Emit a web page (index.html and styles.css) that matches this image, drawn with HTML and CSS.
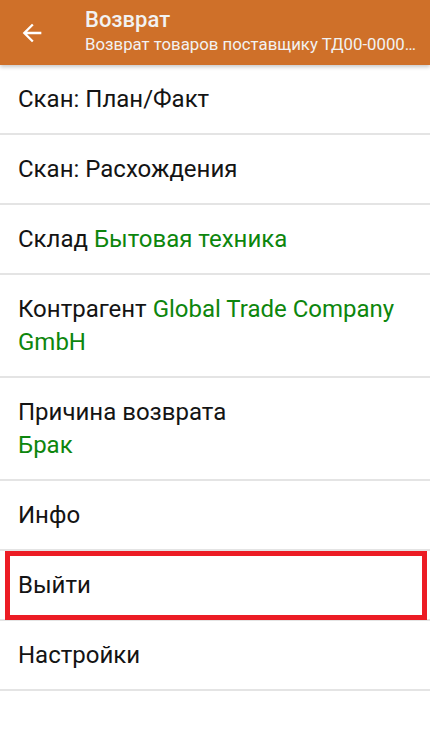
FILE: index.html
```html
<!DOCTYPE html>
<html lang="ru">
<head>
<meta charset="utf-8">
<title>Возврат</title>
<link rel="stylesheet" href="styles.css">
</head>
<body>
<header class="appbar">
  <div class="back">
    <svg viewBox="0 0 24 24" width="28" height="28"><path d="M20 11H7.83l5.59-5.59L12 4l-8 8 8 8 1.41-1.41L7.83 13H20v-2z" fill="#fff"/></svg>
  </div>
  <div class="titles">
    <div class="title">Возврат</div>
    <div class="subtitle">Возврат товаров поставщику ТД00-0000…</div>
  </div>
</header>
<main class="list">
  <div class="item">Скан: План/Факт</div>
  <div class="item">Скан: Расхождения</div>
  <div class="item">Склад <span class="val">Бытовая техника</span></div>
  <div class="item">Контрагент <span class="val">Global Trade Company GmbH</span></div>
  <div class="item">Причина возврата<br><span class="val">Брак</span></div>
  <div class="item">Инфо</div>
  <div class="item marked">Выйти<span class="highlight"></span></div>
  <div class="item">Настройки</div>
</main>
</body>
</html>
```
FILE: styles.css
```css
html, body {
  margin: 0;
  padding: 0;
  background: #fff;
}
body {
  font-family: Roboto, "Noto Sans", "Liberation Sans", sans-serif;
  width: 430px;
  height: 738px;
  overflow: hidden;
}
.appbar {
  height: 65px;
  background: #cf7029;
  display: flex;
  align-items: center;
  box-shadow: 0 2px 4px rgba(0,0,0,0.22);
  position: relative;
  z-index: 1;
}
.back {
  width: 64px;
  height: 65px;
  display: flex;
  align-items: center;
  justify-content: center;
}
.back svg {
  display: block;
}
.titles {
  flex: 1;
  min-width: 0;
  padding-left: 21px;
  padding-right: 10px;
  color: #f2f2f2;
}
.title {
  font-size: 22px;
  font-weight: 500;
  line-height: 26px;
  margin-top: -3px;
}
.subtitle {
  font-size: 16.8px;
  line-height: 22px;
  white-space: nowrap;
  overflow: hidden;
  text-overflow: ellipsis;
}
.list {
  display: flex;
  flex-direction: column;
}
.item {
  position: relative;
  padding: 18px 18px 17px;
  font-size: 24px;
  line-height: 33px;
  color: #141414;
  border-bottom: 2px solid #e4e4e4;
}
.val {
  color: #0d860d;
}
.highlight {
  position: absolute;
  left: 5px;
  right: 3px;
  top: 0;
  bottom: -1px;
  border: 5px solid #ec1c24;
  pointer-events: none;
}
```
